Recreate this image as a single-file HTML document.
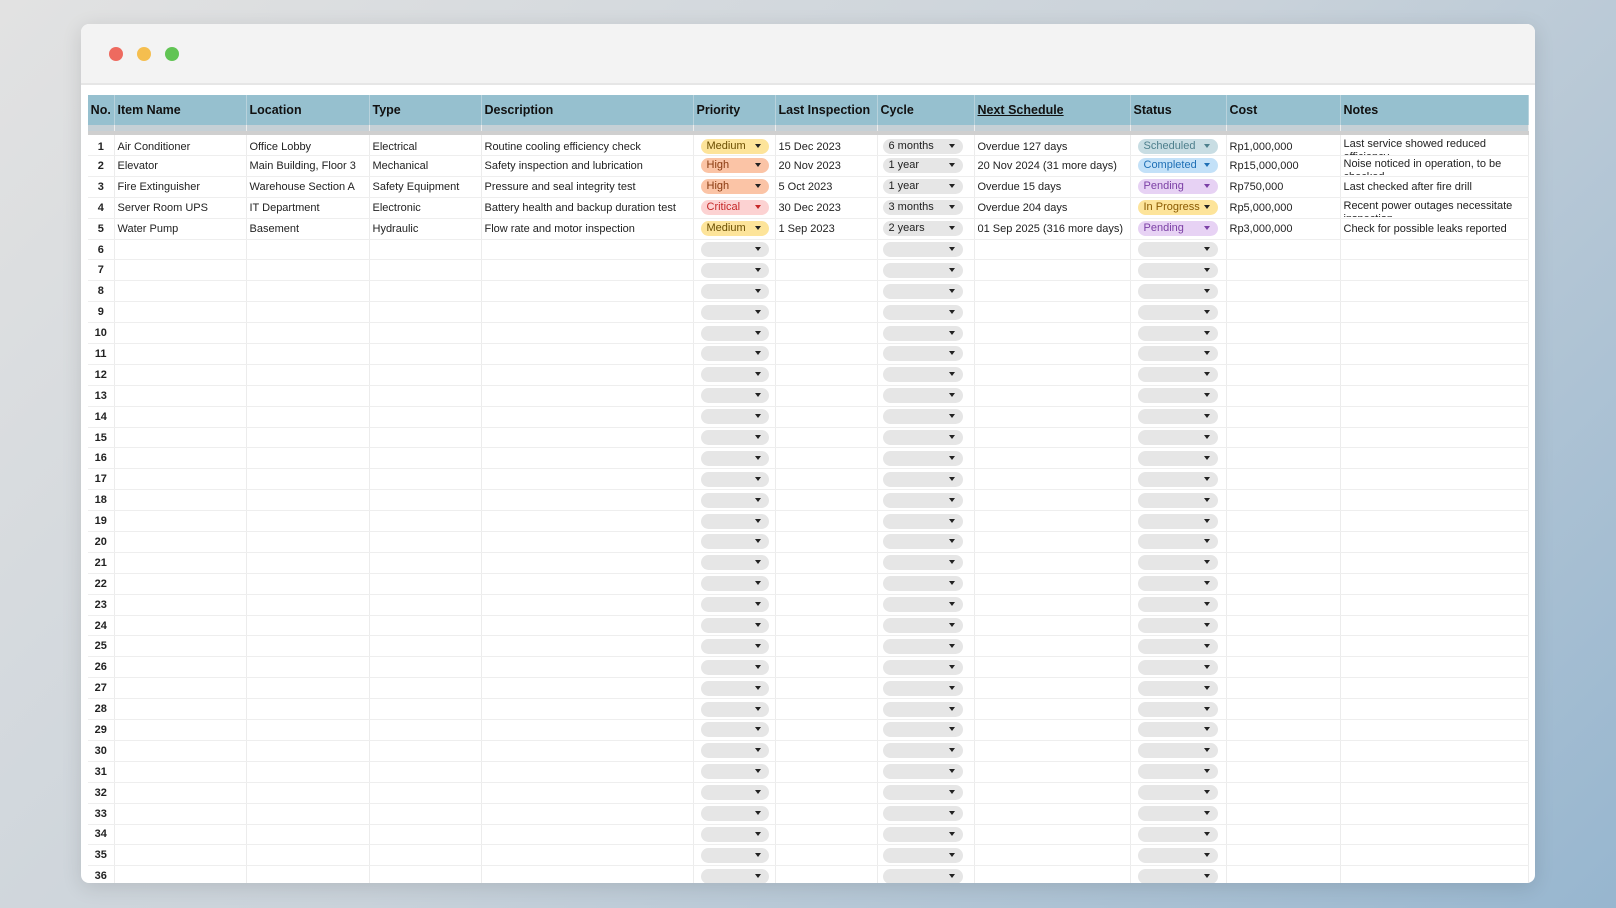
<!DOCTYPE html>
<html><head><meta charset="utf-8"><style>
*{box-sizing:border-box;margin:0;padding:0}
body{width:1616px;height:908px;overflow:hidden;background:linear-gradient(135deg,#e2e2e2 0%,#c9d2da 50%,#97b6cf 100%);font-family:"Liberation Sans",sans-serif;position:relative}
.win{position:absolute;left:81px;top:24px;width:1454px;height:859px;background:#fff;border-radius:8px;overflow:hidden;box-shadow:0 4px 20px rgba(0,0,0,.12)}
.bar{height:61px;background:#f3f3f3;border-bottom:2px solid #e6e6e6;position:relative}
.dot{position:absolute;top:23px;width:14px;height:14px;border-radius:50%}
table{position:absolute;left:7px;top:71px;width:1440px;border-collapse:collapse;table-layout:fixed;font-size:11px;color:#222}
th{background:#96c0cf;height:30px;text-align:left;font-size:12.5px;padding-left:3px;border-right:1px solid #b8d2dc;font-weight:bold;color:#111}
tr.g td{background:#c5d0d6;height:8px;border-bottom:4px solid #cfcfcf;padding:0}
td{height:20.9px;border-right:1px solid #ececec;border-bottom:1px solid #eeeeee;padding-left:3px;white-space:nowrap;overflow:hidden}
tr.f td{padding-top:3px}
td:first-child{text-align:center;font-weight:bold;padding:0}
.c{display:inline-block;height:15px;border-radius:8px;background:#e6e6e6;position:relative;vertical-align:middle;padding-left:6px;line-height:15px;font-size:11px}
.c::after{content:"";position:absolute;right:8px;top:5px;border-left:3.5px solid transparent;border-right:3.5px solid transparent;border-top:4.5px solid #222}
.p{width:68px;margin-left:4px}.y{width:80px;margin-left:2px}.s{width:80px;margin-left:4px}
.med{background:#fde49a;color:#6b4e00}.hi{background:#fbc4a6;color:#8a3a10}.cr{background:#fcd2d2;color:#c62828}.cr::after{border-top-color:#c62828}
.sc{background:#c8dde3;color:#4d7f8c}.sc::after{border-top-color:#4d7f8c}.co{background:#c3e1f8;color:#1e6fb5}.co::after{border-top-color:#1e6fb5}
.pe{background:#e7d2f4;color:#7b3fa5}.pe::after{border-top-color:#7b3fa5}.ip{background:#fde49a;color:#8a5a00}
.n{white-space:normal;line-height:13px;vertical-align:top;padding-top:2px}
.n div{height:17px;overflow:hidden}
</style></head><body>
<div class="win">
<div class="bar"><div class="dot" style="left:28px;background:#ee6a5f"></div><div class="dot" style="left:56px;background:#f5be4f"></div><div class="dot" style="left:84px;background:#61c454"></div></div>
<table>
<colgroup><col style="width:26px"><col style="width:132px"><col style="width:123px"><col style="width:112px"><col style="width:212px"><col style="width:82px"><col style="width:102px"><col style="width:97px"><col style="width:156px"><col style="width:96px"><col style="width:114px"><col style="width:188px"></colgroup>
<tr><th style="padding:0;text-align:center">No.</th><th>Item Name</th><th>Location</th><th>Type</th><th>Description</th><th>Priority</th><th>Last Inspection</th><th>Cycle</th><th><u>Next Schedule</u></th><th>Status</th><th>Cost</th><th>Notes</th></tr>
<tr class="g"><td></td><td></td><td></td><td></td><td></td><td></td><td></td><td></td><td></td><td></td><td></td><td></td></tr>
<tr class="f"><td>1</td><td>Air Conditioner</td><td>Office Lobby</td><td>Electrical</td><td>Routine cooling efficiency check</td><td><span class="c p med">Medium</span></td><td>15 Dec 2023</td><td><span class="c y">6 months</span></td><td>Overdue 127 days</td><td><span class="c s sc">Scheduled</span></td><td>Rp1,000,000</td><td class="n"><div>Last service showed reduced efficiency</div></td></tr>
<tr><td>2</td><td>Elevator</td><td>Main Building, Floor 3</td><td>Mechanical</td><td>Safety inspection and lubrication</td><td><span class="c p hi">High</span></td><td>20 Nov 2023</td><td><span class="c y">1 year</span></td><td>20 Nov 2024 (31 more days)</td><td><span class="c s co">Completed</span></td><td>Rp15,000,000</td><td class="n"><div>Noise noticed in operation, to be checked</div></td></tr>
<tr><td>3</td><td>Fire Extinguisher</td><td>Warehouse Section A</td><td>Safety Equipment</td><td>Pressure and seal integrity test</td><td><span class="c p hi">High</span></td><td>5 Oct 2023</td><td><span class="c y">1 year</span></td><td>Overdue 15 days</td><td><span class="c s pe">Pending</span></td><td>Rp750,000</td><td>Last checked after fire drill</td></tr>
<tr><td>4</td><td>Server Room UPS</td><td>IT Department</td><td>Electronic</td><td>Battery health and backup duration test</td><td><span class="c p cr">Critical</span></td><td>30 Dec 2023</td><td><span class="c y">3 months</span></td><td>Overdue 204 days</td><td><span class="c s ip">In Progress</span></td><td>Rp5,000,000</td><td class="n"><div>Recent power outages necessitate inspection</div></td></tr>
<tr><td>5</td><td>Water Pump</td><td>Basement</td><td>Hydraulic</td><td>Flow rate and motor inspection</td><td><span class="c p med">Medium</span></td><td>1 Sep 2023</td><td><span class="c y">2 years</span></td><td>01 Sep 2025 (316 more days)</td><td><span class="c s pe">Pending</span></td><td>Rp3,000,000</td><td>Check for possible leaks reported</td></tr>
<tr><td>6</td><td></td><td></td><td></td><td></td><td><span class="c p"></span></td><td></td><td><span class="c y"></span></td><td></td><td><span class="c s"></span></td><td></td><td></td></tr>
<tr><td>7</td><td></td><td></td><td></td><td></td><td><span class="c p"></span></td><td></td><td><span class="c y"></span></td><td></td><td><span class="c s"></span></td><td></td><td></td></tr>
<tr><td>8</td><td></td><td></td><td></td><td></td><td><span class="c p"></span></td><td></td><td><span class="c y"></span></td><td></td><td><span class="c s"></span></td><td></td><td></td></tr>
<tr><td>9</td><td></td><td></td><td></td><td></td><td><span class="c p"></span></td><td></td><td><span class="c y"></span></td><td></td><td><span class="c s"></span></td><td></td><td></td></tr>
<tr><td>10</td><td></td><td></td><td></td><td></td><td><span class="c p"></span></td><td></td><td><span class="c y"></span></td><td></td><td><span class="c s"></span></td><td></td><td></td></tr>
<tr><td>11</td><td></td><td></td><td></td><td></td><td><span class="c p"></span></td><td></td><td><span class="c y"></span></td><td></td><td><span class="c s"></span></td><td></td><td></td></tr>
<tr><td>12</td><td></td><td></td><td></td><td></td><td><span class="c p"></span></td><td></td><td><span class="c y"></span></td><td></td><td><span class="c s"></span></td><td></td><td></td></tr>
<tr><td>13</td><td></td><td></td><td></td><td></td><td><span class="c p"></span></td><td></td><td><span class="c y"></span></td><td></td><td><span class="c s"></span></td><td></td><td></td></tr>
<tr><td>14</td><td></td><td></td><td></td><td></td><td><span class="c p"></span></td><td></td><td><span class="c y"></span></td><td></td><td><span class="c s"></span></td><td></td><td></td></tr>
<tr><td>15</td><td></td><td></td><td></td><td></td><td><span class="c p"></span></td><td></td><td><span class="c y"></span></td><td></td><td><span class="c s"></span></td><td></td><td></td></tr>
<tr><td>16</td><td></td><td></td><td></td><td></td><td><span class="c p"></span></td><td></td><td><span class="c y"></span></td><td></td><td><span class="c s"></span></td><td></td><td></td></tr>
<tr><td>17</td><td></td><td></td><td></td><td></td><td><span class="c p"></span></td><td></td><td><span class="c y"></span></td><td></td><td><span class="c s"></span></td><td></td><td></td></tr>
<tr><td>18</td><td></td><td></td><td></td><td></td><td><span class="c p"></span></td><td></td><td><span class="c y"></span></td><td></td><td><span class="c s"></span></td><td></td><td></td></tr>
<tr><td>19</td><td></td><td></td><td></td><td></td><td><span class="c p"></span></td><td></td><td><span class="c y"></span></td><td></td><td><span class="c s"></span></td><td></td><td></td></tr>
<tr><td>20</td><td></td><td></td><td></td><td></td><td><span class="c p"></span></td><td></td><td><span class="c y"></span></td><td></td><td><span class="c s"></span></td><td></td><td></td></tr>
<tr><td>21</td><td></td><td></td><td></td><td></td><td><span class="c p"></span></td><td></td><td><span class="c y"></span></td><td></td><td><span class="c s"></span></td><td></td><td></td></tr>
<tr><td>22</td><td></td><td></td><td></td><td></td><td><span class="c p"></span></td><td></td><td><span class="c y"></span></td><td></td><td><span class="c s"></span></td><td></td><td></td></tr>
<tr><td>23</td><td></td><td></td><td></td><td></td><td><span class="c p"></span></td><td></td><td><span class="c y"></span></td><td></td><td><span class="c s"></span></td><td></td><td></td></tr>
<tr><td>24</td><td></td><td></td><td></td><td></td><td><span class="c p"></span></td><td></td><td><span class="c y"></span></td><td></td><td><span class="c s"></span></td><td></td><td></td></tr>
<tr><td>25</td><td></td><td></td><td></td><td></td><td><span class="c p"></span></td><td></td><td><span class="c y"></span></td><td></td><td><span class="c s"></span></td><td></td><td></td></tr>
<tr><td>26</td><td></td><td></td><td></td><td></td><td><span class="c p"></span></td><td></td><td><span class="c y"></span></td><td></td><td><span class="c s"></span></td><td></td><td></td></tr>
<tr><td>27</td><td></td><td></td><td></td><td></td><td><span class="c p"></span></td><td></td><td><span class="c y"></span></td><td></td><td><span class="c s"></span></td><td></td><td></td></tr>
<tr><td>28</td><td></td><td></td><td></td><td></td><td><span class="c p"></span></td><td></td><td><span class="c y"></span></td><td></td><td><span class="c s"></span></td><td></td><td></td></tr>
<tr><td>29</td><td></td><td></td><td></td><td></td><td><span class="c p"></span></td><td></td><td><span class="c y"></span></td><td></td><td><span class="c s"></span></td><td></td><td></td></tr>
<tr><td>30</td><td></td><td></td><td></td><td></td><td><span class="c p"></span></td><td></td><td><span class="c y"></span></td><td></td><td><span class="c s"></span></td><td></td><td></td></tr>
<tr><td>31</td><td></td><td></td><td></td><td></td><td><span class="c p"></span></td><td></td><td><span class="c y"></span></td><td></td><td><span class="c s"></span></td><td></td><td></td></tr>
<tr><td>32</td><td></td><td></td><td></td><td></td><td><span class="c p"></span></td><td></td><td><span class="c y"></span></td><td></td><td><span class="c s"></span></td><td></td><td></td></tr>
<tr><td>33</td><td></td><td></td><td></td><td></td><td><span class="c p"></span></td><td></td><td><span class="c y"></span></td><td></td><td><span class="c s"></span></td><td></td><td></td></tr>
<tr><td>34</td><td></td><td></td><td></td><td></td><td><span class="c p"></span></td><td></td><td><span class="c y"></span></td><td></td><td><span class="c s"></span></td><td></td><td></td></tr>
<tr><td>35</td><td></td><td></td><td></td><td></td><td><span class="c p"></span></td><td></td><td><span class="c y"></span></td><td></td><td><span class="c s"></span></td><td></td><td></td></tr>
<tr><td>36</td><td></td><td></td><td></td><td></td><td><span class="c p"></span></td><td></td><td><span class="c y"></span></td><td></td><td><span class="c s"></span></td><td></td><td></td></tr>
<tr><td>37</td><td></td><td></td><td></td><td></td><td><span class="c p"></span></td><td></td><td><span class="c y"></span></td><td></td><td><span class="c s"></span></td><td></td><td></td></tr>
</table>
</div>
</body></html>
